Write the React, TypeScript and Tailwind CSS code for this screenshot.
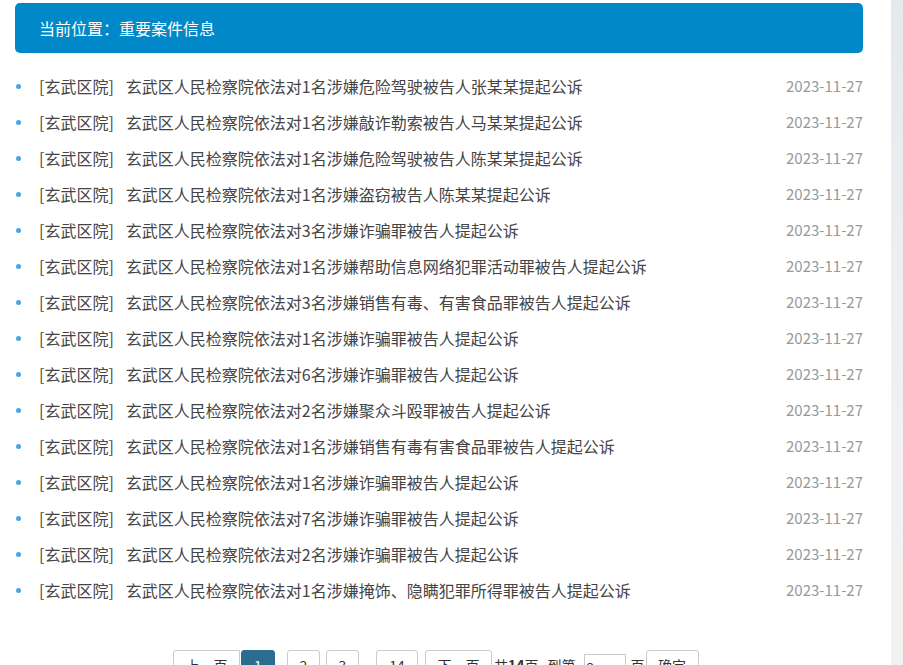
import React from "react";

type Item = {
  court: string;
  title: string;
  date: string;
};

const items: Item[] = [
  { court: "[玄武区院]", title: "玄武区人民检察院依法对1名涉嫌危险驾驶被告人张某某提起公诉", date: "2023-11-27" },
  { court: "[玄武区院]", title: "玄武区人民检察院依法对1名涉嫌敲诈勒索被告人马某某提起公诉", date: "2023-11-27" },
  { court: "[玄武区院]", title: "玄武区人民检察院依法对1名涉嫌危险驾驶被告人陈某某提起公诉", date: "2023-11-27" },
  { court: "[玄武区院]", title: "玄武区人民检察院依法对1名涉嫌盗窃被告人陈某某提起公诉", date: "2023-11-27" },
  { court: "[玄武区院]", title: "玄武区人民检察院依法对3名涉嫌诈骗罪被告人提起公诉", date: "2023-11-27" },
  { court: "[玄武区院]", title: "玄武区人民检察院依法对1名涉嫌帮助信息网络犯罪活动罪被告人提起公诉", date: "2023-11-27" },
  { court: "[玄武区院]", title: "玄武区人民检察院依法对3名涉嫌销售有毒、有害食品罪被告人提起公诉", date: "2023-11-27" },
  { court: "[玄武区院]", title: "玄武区人民检察院依法对1名涉嫌诈骗罪被告人提起公诉", date: "2023-11-27" },
  { court: "[玄武区院]", title: "玄武区人民检察院依法对6名涉嫌诈骗罪被告人提起公诉", date: "2023-11-27" },
  { court: "[玄武区院]", title: "玄武区人民检察院依法对2名涉嫌聚众斗殴罪被告人提起公诉", date: "2023-11-27" },
  { court: "[玄武区院]", title: "玄武区人民检察院依法对1名涉嫌销售有毒有害食品罪被告人提起公诉", date: "2023-11-27" },
  { court: "[玄武区院]", title: "玄武区人民检察院依法对1名涉嫌诈骗罪被告人提起公诉", date: "2023-11-27" },
  { court: "[玄武区院]", title: "玄武区人民检察院依法对7名涉嫌诈骗罪被告人提起公诉", date: "2023-11-27" },
  { court: "[玄武区院]", title: "玄武区人民检察院依法对2名涉嫌诈骗罪被告人提起公诉", date: "2023-11-27" },
  { court: "[玄武区院]", title: "玄武区人民检察院依法对1名涉嫌掩饰、隐瞒犯罪所得罪被告人提起公诉", date: "2023-11-27" },
];

const font = { fontFamily: '"Microsoft YaHei", "Noto Sans CJK SC", "Noto Sans", sans-serif' };

export default function App() {
  return (
    <div className="flex min-h-[665px] bg-white" style={font}>
      {/* 主体 */}
      <main className="w-[891px] bg-white pl-[15px] pr-[28px] pt-[3px]">
        {/* 位置栏 */}
        <div className="flex h-[50px] items-center rounded-[5px] bg-[#0088c9] pl-[24px] text-[16px] text-white">
          当前位置：重要案件信息
        </div>

        {/* 列表 */}
        <ul className="mt-[15px]">
          {items.map((item, i) => (
            <li key={i} className="flex h-[36px] items-center text-[16px]">
              <span className="ml-[1px] mr-[18px] h-[5px] w-[5px] rounded-full bg-[#4ba6dd]" />
              <span className="text-[#444]">{item.court}</span>
              <span className="ml-[12px] flex-1 truncate text-[#444]">{item.title}</span>
              <span className="text-[15px] text-[#999]">{item.date}</span>
            </li>
          ))}
        </ul>

        {/* 分页 */}
        <div className="mt-[42px] flex items-start pl-[158px] text-[14px] text-[#333]">
          <button className="h-[30px] w-[67px] rounded-l-[3px] border border-[#ccc] bg-white">上一页</button>
          <button className="ml-[1px] h-[30px] w-[34px] rounded-[3px] border border-[#2a6d8f] bg-[#2a6d8f] text-white">1</button>
          <button className="ml-[12px] h-[30px] w-[33px] rounded-[3px] border border-[#ccc] bg-white">2</button>
          <button className="ml-[6px] h-[30px] w-[33px] rounded-[3px] border border-[#ccc] bg-white">3</button>
          <span className="h-[30px] w-[17px] text-center leading-[30px]">...</span>
          <button className="h-[30px] w-[42px] rounded-[3px] border border-[#ccc] bg-white">14</button>
          <button className="ml-[7px] h-[30px] w-[67px] rounded-[3px] border border-[#ccc] bg-white">下一页</button>
          <span className="ml-[2px] h-[30px] leading-[30px]">
            共<b>14</b>页
          </span>
          <span className="ml-[9px] h-[30px] leading-[30px]">到第</span>
          <input
            defaultValue="2"
            className="ml-[8px] mt-[4px] h-[26px] w-[42px] border border-[#ccc] px-[2px] text-[14px] outline-none"
          />
          <span className="ml-[5px] h-[30px] leading-[30px]">页</span>
          <button className="ml-[1px] h-[30px] w-[53px] rounded-[3px] border border-[#ccc] bg-white">确定</button>
        </div>
      </main>

      {/* 右侧背景 */}
      <div className="flex-1 bg-gradient-to-b from-[#e4e9ee] via-[#eff0f2] to-[#f2f2f2]" />
    </div>
  );
}
